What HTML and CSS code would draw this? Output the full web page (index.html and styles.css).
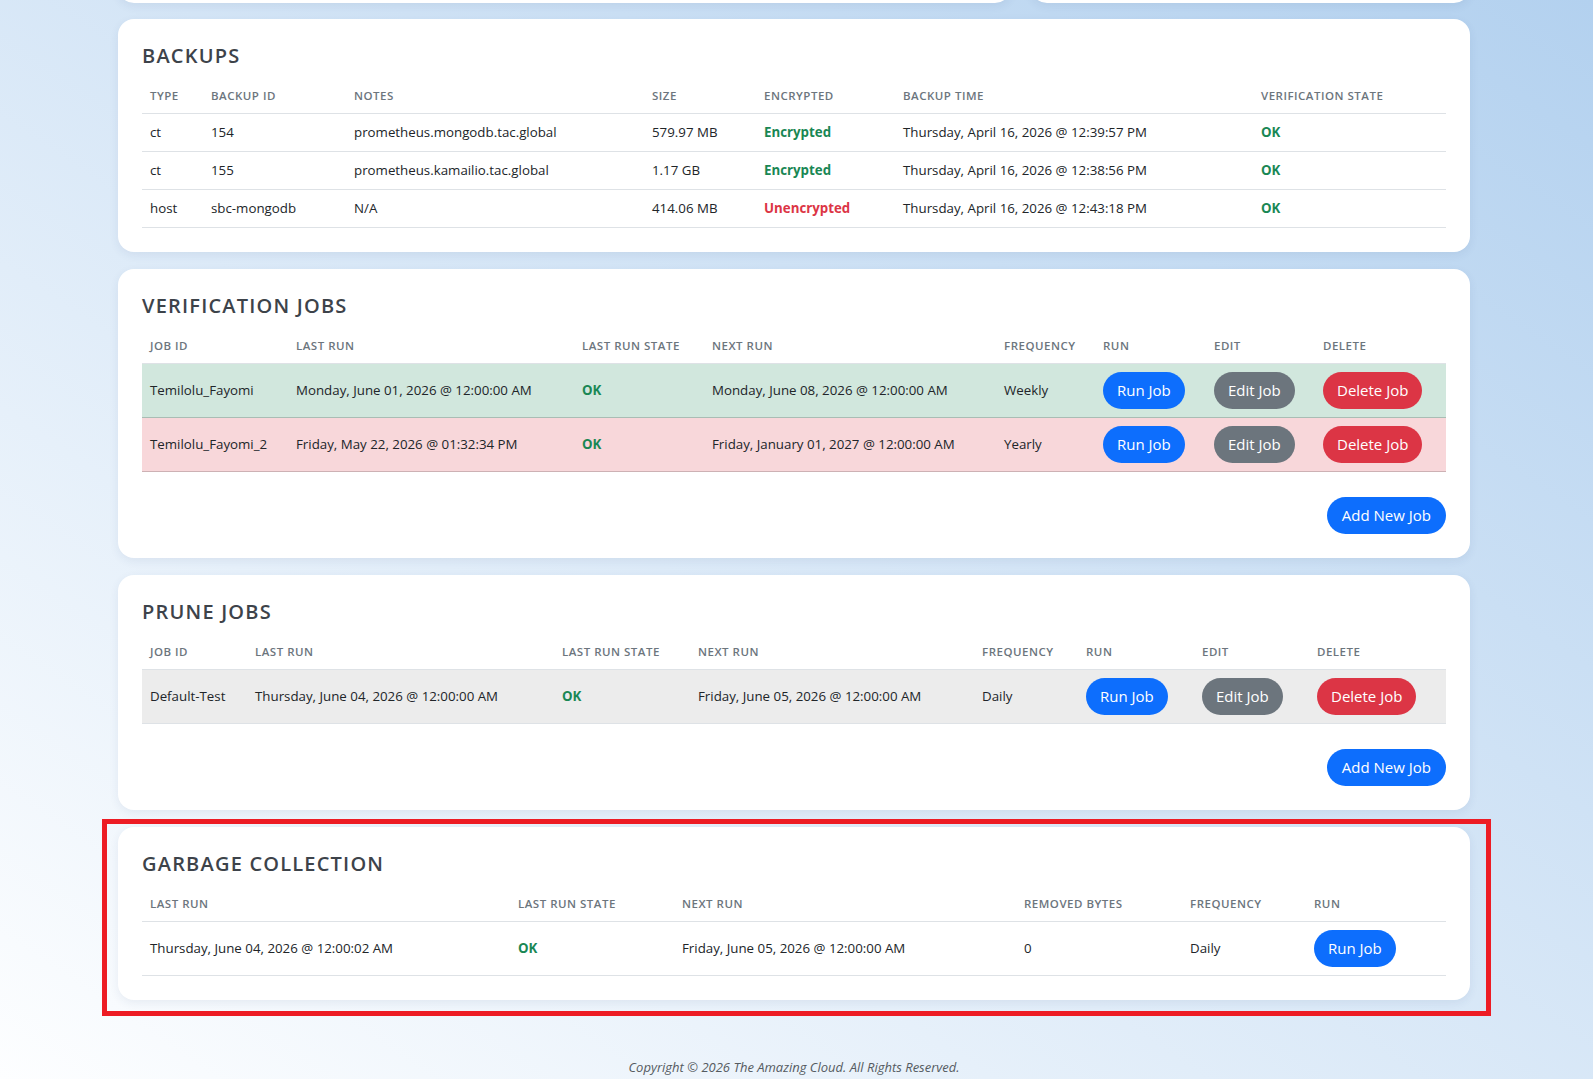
FILE: index.html
```html
<!DOCTYPE html>
<html lang="en">
<head>
  <meta charset="UTF-8" />
  <meta name="viewport" content="width=device-width, initial-scale=1.0"/>
  <title>Backup Server</title>
  <link rel="stylesheet" href="styles.css">
</head>
<body>
  <div class="page">

    <div class="top-row">
      <div class="card stub"></div>
      <div class="card stub"></div>
    </div>

    <section class="card">
      <h2 class="card-title">Backups</h2>
      <table class="data backups">
        <thead>
          <tr>
            <th>Type</th><th>Backup ID</th><th>Notes</th><th>Size</th>
            <th>Encrypted</th><th>Backup Time</th><th>Verification State</th>
          </tr>
        </thead>
        <tbody>
          <tr>
            <td>ct</td><td>154</td><td>prometheus.mongodb.tac.global</td><td>579.97 MB</td>
            <td class="good">Encrypted</td><td>Thursday, April 16, 2026 @ 12:39:57 PM</td><td class="good">OK</td>
          </tr>
          <tr>
            <td>ct</td><td>155</td><td>prometheus.kamailio.tac.global</td><td>1.17 GB</td>
            <td class="good">Encrypted</td><td>Thursday, April 16, 2026 @ 12:38:56 PM</td><td class="good">OK</td>
          </tr>
          <tr>
            <td>host</td><td>sbc-mongodb</td><td>N/A</td><td>414.06 MB</td>
            <td class="bad">Unencrypted</td><td>Thursday, April 16, 2026 @ 12:43:18 PM</td><td class="good">OK</td>
          </tr>
        </tbody>
      </table>
    </section>

    <section class="card">
      <h2 class="card-title">Verification Jobs</h2>
      <table class="data jobs verify">
        <thead>
          <tr>
            <th>Job ID</th><th>Last Run</th><th>Last Run State</th><th>Next Run</th>
            <th>Frequency</th><th>Run</th><th>Edit</th><th>Delete</th>
          </tr>
        </thead>
        <tbody>
          <tr class="row-success">
            <td>Temilolu_Fayomi</td><td>Monday, June 01, 2026 @ 12:00:00 AM</td><td class="good">OK</td>
            <td>Monday, June 08, 2026 @ 12:00:00 AM</td><td>Weekly</td>
            <td><button class="btn btn-primary">Run Job</button></td>
            <td><button class="btn btn-secondary">Edit Job</button></td>
            <td><button class="btn btn-danger">Delete Job</button></td>
          </tr>
          <tr class="row-danger">
            <td>Temilolu_Fayomi_2</td><td>Friday, May 22, 2026 @ 01:32:34 PM</td><td class="good">OK</td>
            <td>Friday, January 01, 2027 @ 12:00:00 AM</td><td>Yearly</td>
            <td><button class="btn btn-primary">Run Job</button></td>
            <td><button class="btn btn-secondary">Edit Job</button></td>
            <td><button class="btn btn-danger">Delete Job</button></td>
          </tr>
        </tbody>
      </table>
      <div class="card-actions">
        <button class="btn btn-primary">Add New Job</button>
      </div>
    </section>

    <section class="card">
      <h2 class="card-title">Prune Jobs</h2>
      <table class="data jobs prune">
        <thead>
          <tr>
            <th>Job ID</th><th>Last Run</th><th>Last Run State</th><th>Next Run</th>
            <th>Frequency</th><th>Run</th><th>Edit</th><th>Delete</th>
          </tr>
        </thead>
        <tbody>
          <tr class="row-active">
            <td>Default-Test</td><td>Thursday, June 04, 2026 @ 12:00:00 AM</td><td class="good">OK</td>
            <td>Friday, June 05, 2026 @ 12:00:00 AM</td><td>Daily</td>
            <td><button class="btn btn-primary">Run Job</button></td>
            <td><button class="btn btn-secondary">Edit Job</button></td>
            <td><button class="btn btn-danger">Delete Job</button></td>
          </tr>
        </tbody>
      </table>
      <div class="card-actions">
        <button class="btn btn-primary">Add New Job</button>
      </div>
    </section>

    <div class="highlight-wrap">
      <section class="card">
        <h2 class="card-title">Garbage Collection</h2>
        <table class="data jobs garbage">
          <thead>
            <tr>
              <th>Last Run</th><th>Last Run State</th><th>Next Run</th>
              <th>Removed Bytes</th><th>Frequency</th><th>Run</th>
            </tr>
          </thead>
          <tbody>
            <tr>
              <td>Thursday, June 04, 2026 @ 12:00:02 AM</td><td class="good">OK</td>
              <td>Friday, June 05, 2026 @ 12:00:00 AM</td><td>0</td><td>Daily</td>
              <td><button class="btn btn-primary">Run Job</button></td>
            </tr>
          </tbody>
        </table>
      </section>
      <div class="highlight"></div>
    </div>

    <footer class="footer">Copyright © 2026 The Amazing Cloud. All Rights Reserved.</footer>
  </div>
</body>
</html>
```

FILE: styles.css
```css
html, body {
  min-height: 100%;
}
body {
  margin: 0;
  font-family: "Open Sans", "Noto Sans", sans-serif;
  font-size: 13.3px;
  color: #212529;
  background: linear-gradient(to top right, #fdfeff 0%, #b3d1ef 100%) fixed;
}
.page {
  width: 1352px;
  padding-left: 118px;
}
.top-row {
  display: grid;
  grid-template-columns: 893px 1fr;
  gap: 20px;
  margin-top: -37px;
  margin-bottom: 16px;
}
.card {
  background: #fff;
  border-radius: 16px;
  box-shadow: 0 3px 10px rgba(40, 70, 110, 0.08);
  padding: 25px 24px 24px;
  margin-bottom: 17px;
}
.card.stub {
  height: 40px;
  padding: 0;
  margin: 0;
}
.card-title {
  margin: 0 0 11px;
  font-size: 20px;
  line-height: 24px;
  font-weight: 600;
  letter-spacing: 1.2px;
  text-transform: uppercase;
  color: #3d434a;
}

/* tables */
.data {
  width: 100%;
  border-collapse: collapse;
  table-layout: fixed;
}
.data th {
  text-align: left;
  font-size: 11.5px;
  line-height: 18px;
  font-weight: 600;
  letter-spacing: 0.5px;
  text-transform: uppercase;
  color: #6c757d;
  padding: 8px 8px;
  border-bottom: 1px solid #dee2e6;
}
.data td {
  padding: 8px 8px;
  line-height: 21px;
  border-bottom: 1px solid #dee2e6;
  white-space: nowrap;
}
.good {
  color: #198754;
  font-weight: 700;
}
.bad {
  color: #dc3545;
  font-weight: 700;
}
.row-success td {
  background: #d1e7dd;
  border-bottom-color: #a9bdb4;
}
.row-danger td {
  background: #f8d7da;
  border-bottom-color: #cdb1b4;
}
.row-active td {
  background: #ececec;
}
.jobs td {
  vertical-align: middle;
}

.backups th:nth-child(1) { width: 45px; }
.backups th:nth-child(2) { width: 127px; }
.backups th:nth-child(3) { width: 282px; }
.backups th:nth-child(4) { width: 96px; }
.backups th:nth-child(5) { width: 123px; }
.backups th:nth-child(6) { width: 342px; }

.verify th:nth-child(1) { width: 130px; }
.verify th:nth-child(2) { width: 270px; }
.verify th:nth-child(3) { width: 114px; }
.verify th:nth-child(4) { width: 276px; }
.verify th:nth-child(5) { width: 83px; }
.verify th:nth-child(6) { width: 95px; }
.verify th:nth-child(7) { width: 93px; }

.prune th:nth-child(1) { width: 89px; }
.prune th:nth-child(2) { width: 291px; }
.prune th:nth-child(3) { width: 120px; }
.prune th:nth-child(4) { width: 268px; }
.prune th:nth-child(5) { width: 88px; }
.prune th:nth-child(6) { width: 100px; }
.prune th:nth-child(7) { width: 99px; }

.garbage th:nth-child(1) { width: 352px; }
.garbage th:nth-child(2) { width: 148px; }
.garbage th:nth-child(3) { width: 326px; }
.garbage th:nth-child(4) { width: 150px; }
.garbage th:nth-child(5) { width: 108px; }

/* buttons */
.btn {
  font-family: inherit;
  font-size: 15px;
  line-height: 23px;
  padding: 6px 13px;
  border: 1px solid transparent;
  border-radius: 50rem;
  color: #fff;
  cursor: pointer;
  vertical-align: middle;
}
.btn-primary { background: #0d6efd; }
.btn-secondary { background: #6c757d; }
.btn-danger { background: #dc3545; }

.card-actions {
  display: flex;
  justify-content: flex-end;
  margin-top: 25px;
}
.card-actions .btn {
  padding: 6px 14px;
}

.highlight-wrap {
  position: relative;
}
.highlight {
  position: absolute;
  top: -8px;
  left: -16px;
  right: -21px;
  bottom: -16px;
  border: 5px solid #ed1c24;
  pointer-events: none;
}

.footer {
  margin-top: 57px;
  text-align: center;
  font-style: italic;
  font-size: 13px;
  line-height: 20px;
  color: #555b61;
}
```
